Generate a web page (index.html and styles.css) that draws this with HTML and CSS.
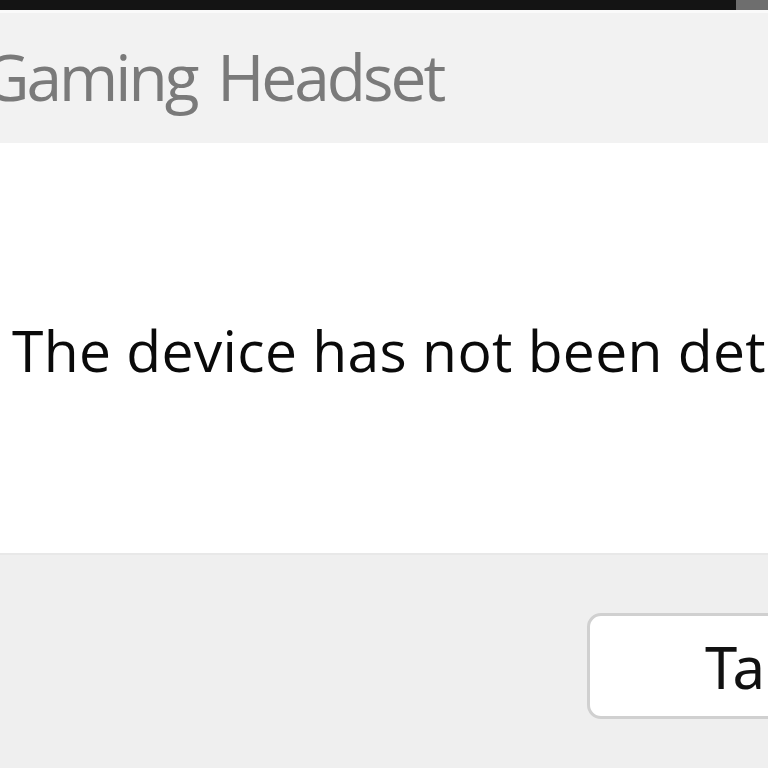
FILE: index.html
```html
<!DOCTYPE html>
<html>
<head>
<meta charset="utf-8">
<link rel="stylesheet" href="styles.css">
</head>
<body>
<div class="window">
  <div class="topbar"><div class="topbar-end"></div></div>
  <div class="titlebar"><span class="title">Gaming Headset</span></div>
  <div class="content"><p class="message">The device has not been detected.</p></div>
  <div class="footer"><button class="btn">Tallenna</button></div>
</div>
</body>
</html>
```
FILE: styles.css
```css
html, body {
  margin: 0;
  padding: 0;
  width: 768px;
  height: 768px;
  overflow: hidden;
  background: #efefef;
}
.window {
  display: flex;
  flex-direction: column;
  height: 768px;
  font-family: "Open Sans", "Noto Sans", sans-serif;
}
.topbar {
  height: 10px;
  background: #141414;
  border-bottom: 3px solid #fafafa;
  display: flex;
  justify-content: flex-end;
}
.topbar-end {
  width: 32px;
  background: #6e6e6e;
}
.titlebar {
  height: 130px;
  background: #f2f2f2;
  display: flex;
  align-items: center;
  white-space: nowrap;
  overflow: hidden;
}
.title {
  margin-left: -17px;
  font-size: 64px;
  color: #7a7a7a;
  letter-spacing: -3px;
  word-spacing: 7px;
  padding-bottom: 4px;
}
.content {
  height: 410px;
  background: #ffffff;
  display: flex;
  align-items: center;
  white-space: nowrap;
  overflow: hidden;
  border-bottom: 2px solid #e8e8e8;
}
.message {
  margin: 0 0 0 12px;
  font-size: 57px;
  letter-spacing: 0.3px;
  color: #0a0a0a;
  padding-top: 4px;
}
.footer {
  flex: 1;
  background: #efefef;
  padding: 58px 0 0 587px;
  overflow: hidden;
  white-space: nowrap;
}
.btn {
  width: 360px;
  height: 106px;
  background: #ffffff;
  border: 3px solid #d0d0d0;
  border-radius: 14px;
  font-family: "Noto Sans", "Open Sans", sans-serif;
  font-size: 58px;
  color: #111111;
  text-align: left;
  padding: 0 0 0 115px;
}
```
